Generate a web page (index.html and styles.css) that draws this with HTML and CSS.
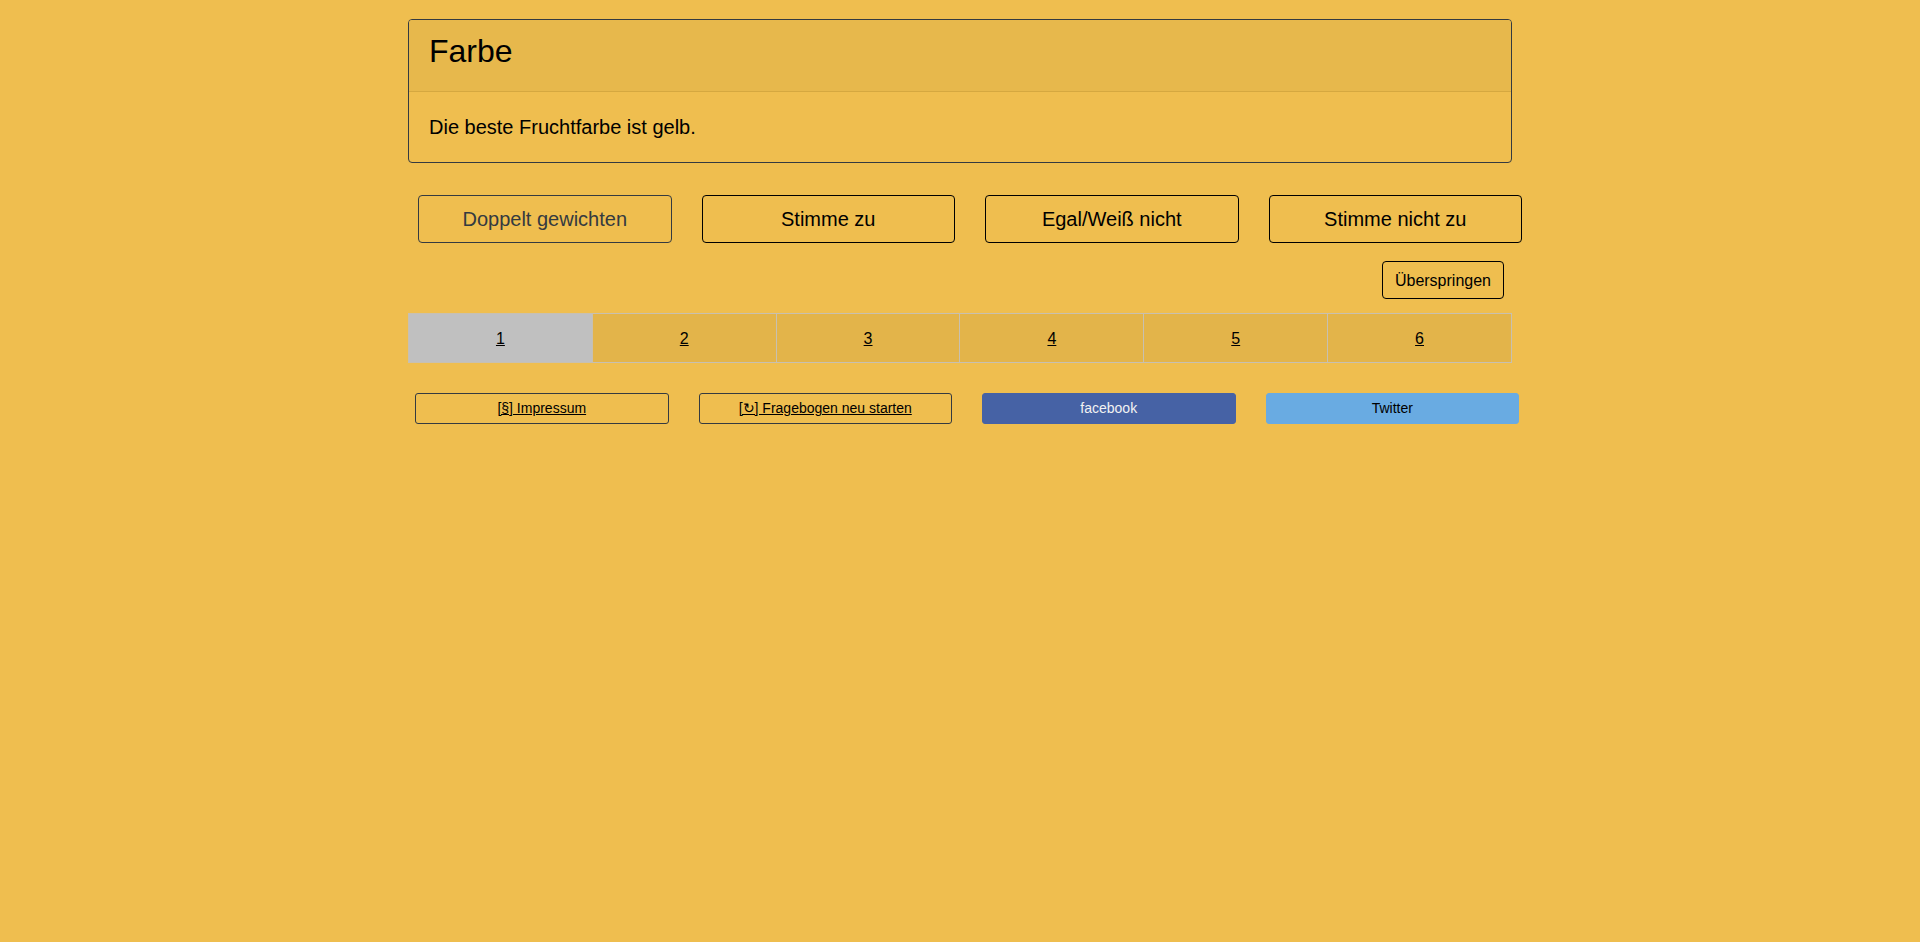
FILE: index.html
```html
<!DOCTYPE html>
<html lang="de">
<head>
<meta charset="utf-8">
<title>Farbe</title>
<link rel="stylesheet" href="styles.css">
</head>
<body>
<main class="page">
  <section class="card">
    <header class="card-header"><h1 class="card-title">Farbe</h1></header>
    <div class="card-body"><p class="card-text">Die beste Fruchtfarbe ist gelb.</p></div>
  </section>

  <div class="answers">
    <button class="answer answer-muted">Doppelt gewichten</button>
    <button class="answer">Stimme zu</button>
    <button class="answer">Egal/Weiß nicht</button>
    <button class="answer">Stimme nicht zu</button>
  </div>

  <div class="skip-row">
    <button class="skip">Überspringen</button>
  </div>

  <nav class="pager">
    <a class="pager-cell active" href="#">1</a>
    <a class="pager-cell" href="#">2</a>
    <a class="pager-cell" href="#">3</a>
    <a class="pager-cell" href="#">4</a>
    <a class="pager-cell" href="#">5</a>
    <a class="pager-cell" href="#">6</a>
  </nav>

  <footer class="links">
    <a class="link link-outline" href="#">[§] Impressum</a>
    <a class="link link-outline" href="#">[↻] Fragebogen neu starten</a>
    <a class="link link-facebook" href="#">facebook</a>
    <a class="link link-twitter" href="#">Twitter</a>
  </footer>
</main>
</body>
</html>
```

FILE: styles.css
```css
html, body {
  margin: 0;
  padding: 0;
  background: #efbe4f;
  font-family: "Liberation Sans", Arial, sans-serif;
  color: #000;
}

.page {
  width: 1104px;
  margin: 0 auto;
  padding-top: 19px;
}

.card {
  border: 1px solid #343a40;
  border-radius: 4px;
  overflow: hidden;
}

.card-header {
  background: #e7b84c;
  border-bottom: 1px solid #d5a840;
  padding: 13px 20px 21px;
}

.card-title {
  margin: 0;
  font-size: 32px;
  font-weight: normal;
  line-height: 37px;
}

.card-body {
  padding: 20px 20px;
}

.card-text {
  margin: 0;
  font-size: 20px;
  line-height: 30px;
}

.answers {
  display: grid;
  grid-template-columns: repeat(4, 1fr);
  column-gap: 30px;
  width: 1104px;
  margin: 32px 0 0 10px;
}

.answer {
  font-family: "Liberation Sans", Arial, sans-serif;
  font-size: 20px;
  line-height: 30px;
  padding: 8px 10px;
  background: transparent;
  border: 1px solid #000;
  border-radius: 4px;
  color: #000;
}

.answer-muted {
  border-color: #343a40;
  color: #343a40;
}

.skip-row {
  display: flex;
  justify-content: flex-end;
  margin: 18px 8px 0 0;
}

.skip {
  font-family: "Liberation Sans", Arial, sans-serif;
  font-size: 16px;
  line-height: 24px;
  padding: 7px 12px 5px;
  background: transparent;
  border: 1px solid #000;
  border-radius: 4px;
  color: #000;
}

.pager {
  display: flex;
  margin-top: 14px;
  border: 1px solid #c8c0b0;
}

.pager-cell {
  flex: 1;
  text-align: center;
  font-size: 16px;
  line-height: 24px;
  padding: 13px 0 11px;
  background: #e3b44a;
  color: #000;
  text-decoration: underline;
  border-left: 1px solid #c8c0b0;
}

.pager-cell:first-child {
  border-left: none;
}

.pager-cell.active {
  background: #c0c0c0;
}

.links {
  display: grid;
  grid-template-columns: repeat(4, 1fr);
  column-gap: 30px;
  width: 1104px;
  margin: 30px 0 0 7px;
}

.link {
  display: block;
  text-align: center;
  font-size: 14px;
  line-height: 21px;
  padding: 4px 0;
  border: 1px solid transparent;
  border-radius: 3px;
  color: #000;
}

.link-outline {
  border-color: #343a40;
  text-decoration: underline;
}

.link-facebook {
  background: #4662a5;
  border-color: #4662a5;
  color: #f2f2f2;
  text-decoration: none;
}

.link-twitter {
  background: #69abe2;
  border-color: #69abe2;
  color: #000;
  text-decoration: none;
}
```
